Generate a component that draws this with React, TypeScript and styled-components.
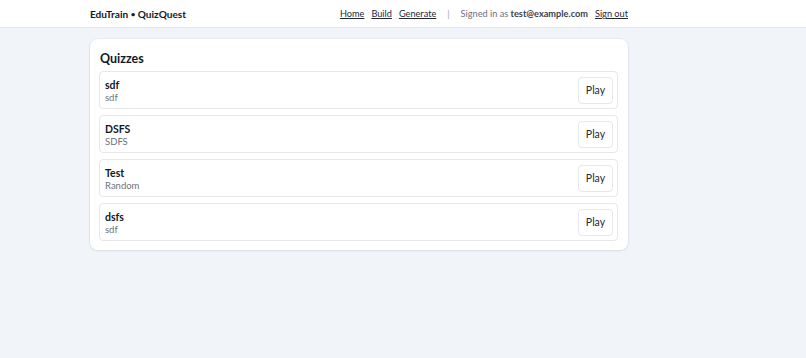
import React from "react";
import styled, { createGlobalStyle } from "styled-components";

const Global = createGlobalStyle`
  html, body { margin: 0; padding: 0; }
  body {
    background: #f1f4f8;
    font-family: Lato, "Open Sans", "Liberation Sans", sans-serif;
    color: #111827;
    min-height: 358px;
  }
`;

const Header = styled.header`
  background: #ffffff;
  border-bottom: 1px solid #e5e7eb;
  height: 28px;
  box-sizing: border-box;
`;

const HeaderInner = styled.div`
  width: 538px;
  margin-left: 90px;
  height: 100%;
  display: flex;
  align-items: center;
  justify-content: space-between;
`;

const Brand = styled.div`
  font-size: 10.1px;
  font-weight: 700;
  color: #111827;
`;

const Dot = styled.span`
  font-size: 8px;
  vertical-align: 1px;
`;

const Nav = styled.nav`
  display: flex;
  align-items: center;
  gap: 7px;
  font-size: 9.2px;
  color: #374151;
`;

const NavLink = styled.a`
  color: #1f2937;
  text-decoration: underline;
  cursor: pointer;
`;

const Sep = styled.span`
  color: #9ca3af;
  margin: 0 4px;
`;

const Signed = styled.span`
  color: #6b7280;
  b { color: #374151; font-weight: 700; }
`;

const Main = styled.main`
  width: 538px;
  margin-left: 90px;
  padding-top: 11px;
`;

const Card = styled.section`
  background: #ffffff;
  border-radius: 8px;
  box-shadow: 0 1px 3px rgba(15, 23, 42, 0.08), 0 0 0 1px rgba(15, 23, 42, 0.03);
  padding: 11px 10px 9px 9px;
`;

const Title = styled.h2`
  margin: 0 0 3px 1px;
  font-size: 12.5px;
  font-weight: 700;
  line-height: 18px;
`;

const List = styled.div`
  display: flex;
  flex-direction: column;
  gap: 6px;
`;

const Row = styled.div`
  display: flex;
  align-items: center;
  justify-content: space-between;
  height: 38px;
  box-sizing: border-box;
  border: 1px solid #e5e7eb;
  border-radius: 4px;
  padding: 0 4px 0 5px;
`;

const Info = styled.div`
  display: flex;
  flex-direction: column;
  padding-top: 2px;
`;

const RowTitle = styled.div`
  font-size: 10.5px;
  font-weight: 700;
  line-height: 14px;
  color: #111827;
`;

const RowSub = styled.div`
  font-size: 9.5px;
  line-height: 12px;
  color: #6b7280;
`;

const PlayButton = styled.button`
  font-family: inherit;
  font-size: 10.5px;
  color: #1f2937;
  background: #ffffff;
  border: 1px solid #e5e7eb;
  border-radius: 4px;
  width: 35px;
  height: 27px;
  padding: 0;
  cursor: pointer;
`;

const quizzes = [
  { title: "sdf", sub: "sdf" },
  { title: "DSFS", sub: "SDFS" },
  { title: "Test", sub: "Random" },
  { title: "dsfs", sub: "sdf" },
];

export default function App() {
  return (
    <>
      <Global />
      <Header>
        <HeaderInner>
          <Brand>
            EduTrain <Dot>•</Dot> QuizQuest
          </Brand>
          <Nav>
            <NavLink>Home</NavLink>
            <NavLink>Build</NavLink>
            <NavLink>Generate</NavLink>
            <Sep>|</Sep>
            <Signed>
              Signed in as <b>test@example.com</b>
            </Signed>
            <NavLink>Sign out</NavLink>
          </Nav>
        </HeaderInner>
      </Header>
      <Main>
        <Card>
          <Title>Quizzes</Title>
          <List>
            {quizzes.map((q, i) => (
              <Row key={i}>
                <Info>
                  <RowTitle>{q.title}</RowTitle>
                  <RowSub>{q.sub}</RowSub>
                </Info>
                <PlayButton>Play</PlayButton>
              </Row>
            ))}
          </List>
        </Card>
      </Main>
    </>
  );
}
